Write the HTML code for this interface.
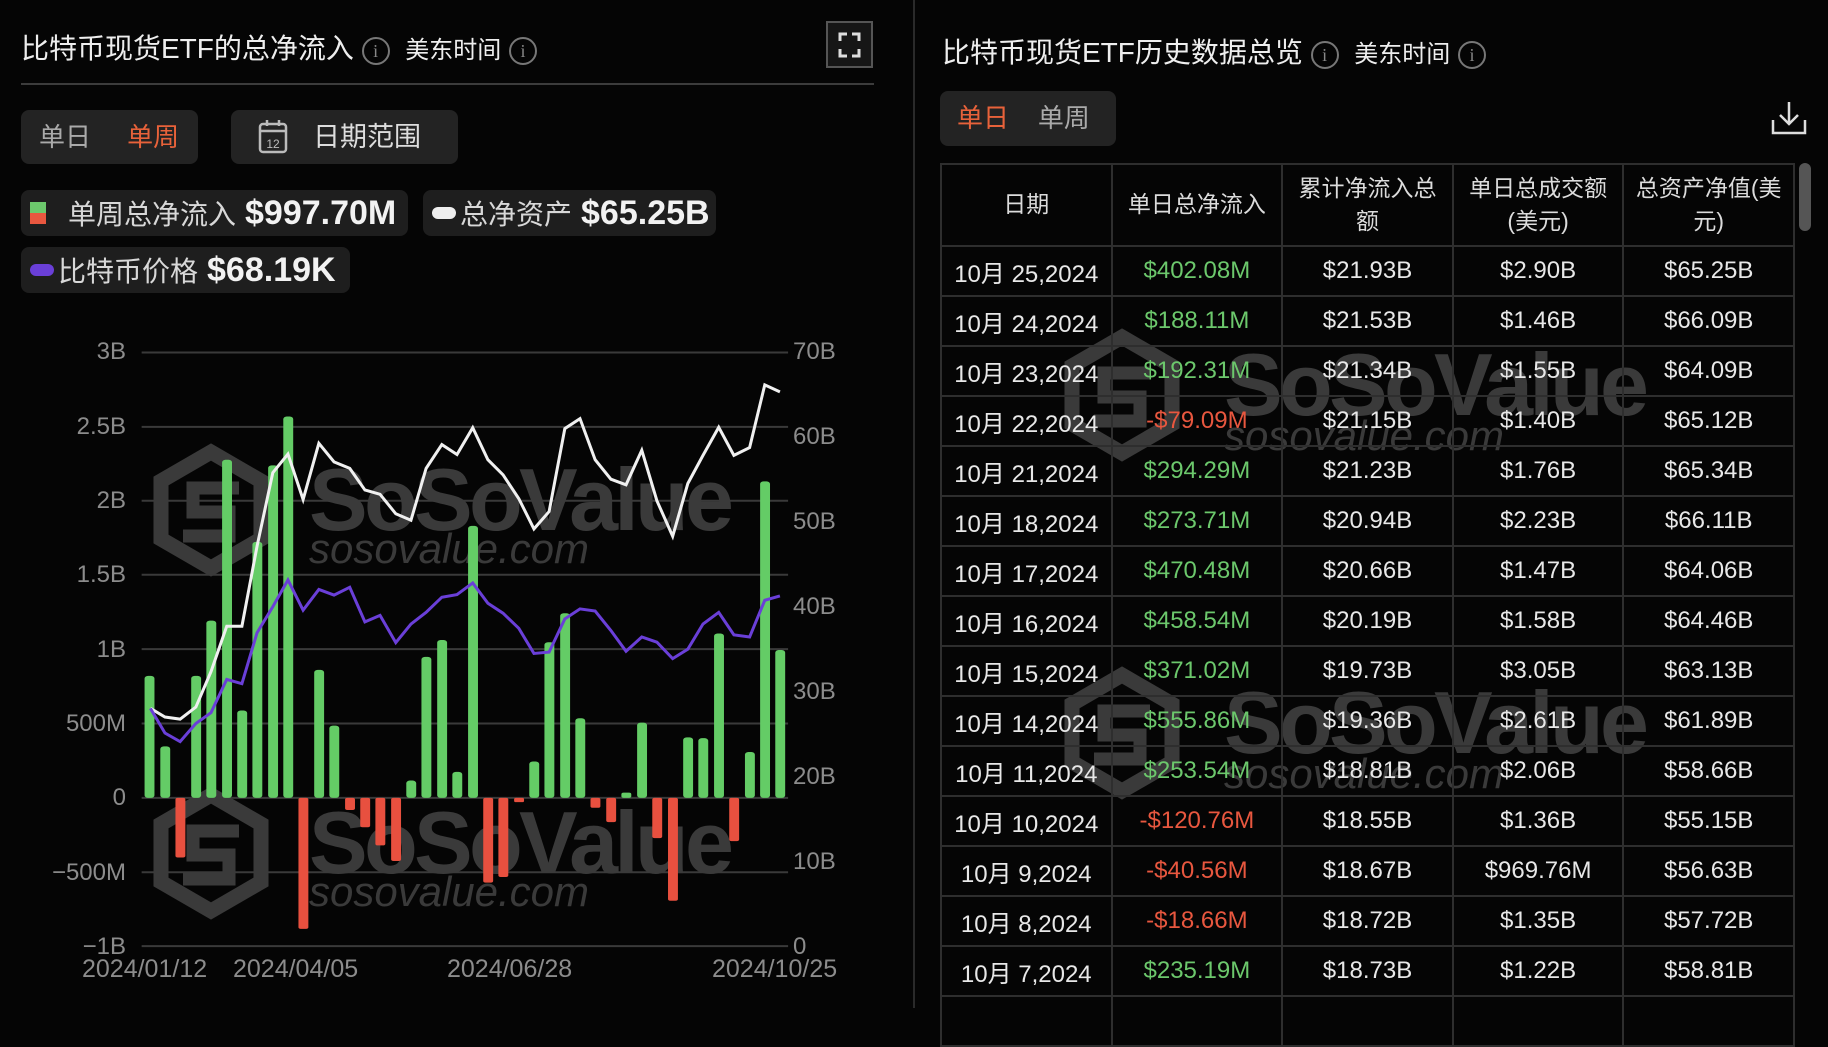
<!DOCTYPE html>
<html><head><meta charset="utf-8"><style>
*{margin:0;padding:0;box-sizing:border-box}
body{width:1828px;height:1008px;background:#050505;overflow:hidden;position:relative;font-family:"Liberation Sans","Noto Sans CJK SC",sans-serif;color:#e6e6e6}
.a{position:absolute;white-space:nowrap}
.info{display:inline-block;width:28px;height:28px;border:2px solid #777;border-radius:50%;color:#888;font-size:18px;text-align:center;line-height:24px;font-family:"Liberation Serif",serif;vertical-align:middle}
.chip{position:absolute;background:#1e1e1e;border-radius:8px;height:46px;display:flex;align-items:center;font-size:28px;color:#d8d8d8}
.chip b{color:#f2f2f2;font-size:34px;margin-left:9px}
.yl{position:absolute;font-size:24px;color:#8c8c8c;width:100px;text-align:right;left:26px}
.yr{position:absolute;font-size:24px;color:#8c8c8c;left:793px}
.dl{position:absolute;font-size:25px;color:#8c8c8c;top:955px}
table{position:absolute;left:940px;top:163px;border-collapse:collapse;font-size:24px;width:855px}
td{border:2px solid #2e2e2e;text-align:center;height:50px;color:#e8e8e8;width:171px}
tr:first-child td{height:82px;font-size:23px;line-height:1.45;color:#dcdcdc}
td.g{color:#6cc86c}td.r{color:#e8573f}
</style></head><body>
<div class="a" style="left:21px;top:27px;font-size:28px;color:#eee">比特币现货ETF的总净流入 <span class="info">i</span>&nbsp;&nbsp;<span style="font-size:24px">美东时间</span> <span class="info">i</span></div>
<div class="a" style="left:826px;top:21px;width:47px;height:47px;border:2px solid #555;background:#161616"></div>
<svg class="a" style="left:826px;top:21px" width="47" height="47"><path d="M14 20V13H21M26 13H33V20M33 28V35H26M21 35H14V28" stroke="#ddd" stroke-width="3" fill="none"/></svg>
<div class="a" style="left:21px;top:83px;width:853px;height:2px;background:#3c3c3c"></div>
<div class="a" style="left:21px;top:110px;width:177px;height:54px;background:#232323;border-radius:8px;font-size:26px;line-height:54px;padding-left:18px;color:#aaa">单日&nbsp;&nbsp;&nbsp;&nbsp;&nbsp;<span style="color:#e8623a">单周</span></div>
<div class="a" style="left:231px;top:110px;width:227px;height:54px;background:#232323;border-radius:8px;font-size:27px;line-height:54px;padding-left:82px;color:#ddd">日期范围</div>
<svg class="a" style="left:258px;top:118px" width="32" height="38"><rect x="2" y="6" width="26" height="28" rx="3" stroke="#bbb" stroke-width="2.5" fill="none"/><path d="M2 13H28M9 2V8M21 2V8" stroke="#bbb" stroke-width="2.5"/><text x="15" y="30" font-size="12" fill="#bbb" text-anchor="middle" font-family="Liberation Sans">12</text></svg>
<div class="chip" style="left:21px;top:190px;width:387px"><span style="display:inline-block;width:16px;height:22px;margin-left:9px;background:linear-gradient(#6cc86c 50%,#e8573f 50%);margin-right:22px"></span>单周总净流入<b>$997.70M</b></div>
<div class="chip" style="left:423px;top:190px;width:293px"><span style="display:inline-block;width:24px;height:12px;border-radius:6px;background:#eee;margin:0 4px 0 9px"></span>总净资产<b>$65.25B</b></div>
<div class="chip" style="left:21px;top:247px;width:329px"><span style="display:inline-block;width:24px;height:12px;border-radius:6px;background:#6a3fd8;margin:0 4px 0 9px"></span>比特币价格<b>$68.19K</b></div>
<svg class="a" style="left:0;top:0" width="1828" height="1008">
<defs><g id="hx"><path d="M0 -58L50 -29V29L0 58L-50 29V-29Z" stroke="#3a3a3a" stroke-width="15" fill="none"/><path d="M28 -22H-18V2H18V26H-28" stroke="#3a3a3a" stroke-width="13" fill="none"/></g></defs>
<g font-family="Liberation Sans" fill="#3a3a3a">
<use href="#hx" x="211" y="510"/><text x="309" y="530" font-size="88" font-weight="bold" textLength="425">SoSoValue</text><text x="309" y="563" font-size="42" font-style="italic" textLength="280">sosovalue.com</text>
<use href="#hx" x="211" y="853"/><text x="309" y="873" font-size="88" font-weight="bold" textLength="425">SoSoValue</text><text x="309" y="906" font-size="42" font-style="italic" textLength="280">sosovalue.com</text>
<use href="#hx" x="1122" y="395"/><text x="1224" y="415" font-size="88" font-weight="bold" textLength="425">SoSoValue</text><text x="1224" y="450" font-size="42" font-style="italic" textLength="280">sosovalue.com</text>
<use href="#hx" x="1122" y="733"/><text x="1224" y="753" font-size="88" font-weight="bold" textLength="425">SoSoValue</text><text x="1224" y="788" font-size="42" font-style="italic" textLength="280">sosovalue.com</text>
</g></svg>
<svg class="a" style="left:0;top:330px" width="914" height="678" viewBox="0 0 1568 1568" preserveAspectRatio="none">
<path vector-effect="non-scaling-stroke" stroke="#3a3a3a" stroke-width="2" d="M243 52H1352M243 224H1352M243 395H1352M243 566H1352M243 738H1352M243 910H1352M243 1082H1352M243 1254H1352M243 1425H1352"/>
<g fill="#64cc66">
<rect x="248" y="800" width="17" height="282" rx="6"/><rect x="275" y="963" width="17" height="119" rx="6"/><rect x="328" y="800" width="17" height="282" rx="6"/><rect x="354" y="672" width="17" height="410" rx="6"/><rect x="381" y="300" width="17" height="782" rx="6"/><rect x="407" y="880" width="17" height="202" rx="6"/><rect x="433" y="490" width="17" height="592" rx="6"/><rect x="460" y="313" width="17" height="769" rx="6"/><rect x="486" y="200" width="17" height="882" rx="6"/><rect x="539" y="786" width="17" height="296" rx="6"/><rect x="565" y="915" width="17" height="167" rx="6"/><rect x="697" y="1042" width="17" height="40" rx="6"/><rect x="723" y="756" width="17" height="326" rx="6"/><rect x="750" y="717" width="17" height="365" rx="6"/><rect x="776" y="1022" width="17" height="60" rx="6"/><rect x="803" y="453" width="17" height="629" rx="6"/><rect x="908" y="998" width="17" height="84" rx="6"/><rect x="934" y="722" width="17" height="360" rx="6"/><rect x="961" y="655" width="17" height="427" rx="6"/><rect x="987" y="898" width="17" height="184" rx="6"/><rect x="1066" y="1070" width="17" height="12" rx="4"/><rect x="1093" y="908" width="17" height="174" rx="6"/><rect x="1172" y="942" width="17" height="140" rx="6"/><rect x="1198" y="944" width="17" height="138" rx="6"/><rect x="1225" y="702" width="17" height="380" rx="6"/><rect x="1278" y="976" width="17" height="106" rx="6"/><rect x="1304" y="350" width="17" height="732" rx="6"/><rect x="1330" y="740" width="17" height="342" rx="6"/>
</g>
<g fill="#e8503f">
<rect x="301" y="1082" width="17" height="138" rx="4"/><rect x="512" y="1082" width="17" height="303" rx="4"/><rect x="592" y="1082" width="17" height="28" rx="4"/><rect x="618" y="1082" width="17" height="68" rx="4"/><rect x="644" y="1082" width="17" height="110" rx="4"/><rect x="671" y="1082" width="17" height="146" rx="4"/><rect x="829" y="1082" width="17" height="196" rx="4"/><rect x="855" y="1082" width="17" height="183" rx="4"/><rect x="882" y="1082" width="17" height="10" rx="3"/><rect x="1013" y="1082" width="17" height="23" rx="4"/><rect x="1040" y="1082" width="17" height="56" rx="4"/><rect x="1119" y="1082" width="17" height="93" rx="4"/><rect x="1146" y="1082" width="17" height="238" rx="4"/><rect x="1251" y="1082" width="17" height="100" rx="4"/>
</g>
<polyline vector-effect="non-scaling-stroke" fill="none" stroke="#f0f0f0" stroke-width="3" points="258,875 283,895 309,900 336,872 362,790 389,685 415,685 441,500 468,330 494,287 520,392 547,262 573,305 600,320 626,370 652,380 679,425 705,440 731,320 758,265 784,288 811,226 837,300 863,335 890,390 916,460 942,420 969,228 995,205 1021,300 1048,345 1074,358 1101,278 1127,395 1154,477 1180,355 1206,290 1233,225 1259,290 1286,272 1312,127 1338,143"/>
<polyline vector-effect="non-scaling-stroke" fill="none" stroke="#6a3fd8" stroke-width="3" points="258,875 283,932 309,952 336,910 362,885 389,808 415,818 441,700 468,640 494,578 520,648 547,600 573,613 600,595 626,675 652,660 679,723 705,680 731,653 758,618 784,612 811,585 837,632 863,655 890,690 916,748 942,745 969,668 995,645 1021,650 1048,695 1074,743 1101,710 1127,722 1154,760 1180,738 1206,680 1233,653 1259,705 1286,710 1312,625 1338,615"/>
</svg>
<div class="yl" style="top:338px">3B</div><div class="yl" style="top:413px">2.5B</div><div class="yl" style="top:487px">2B</div><div class="yl" style="top:561px">1.5B</div><div class="yl" style="top:636px">1B</div><div class="yl" style="top:710px">500M</div><div class="yl" style="top:784px">0</div><div class="yl" style="top:859px">−500M</div><div class="yl" style="top:933px">−1B</div>
<div class="yr" style="top:338px">70B</div><div class="yr" style="top:423px">60B</div><div class="yr" style="top:508px">50B</div><div class="yr" style="top:593px">40B</div><div class="yr" style="top:678px">30B</div><div class="yr" style="top:763px">20B</div><div class="yr" style="top:848px">10B</div><div class="yr" style="top:933px">0</div>
<div class="dl" style="left:82px">2024/01/12</div><div class="dl" style="left:233px">2024/04/05</div><div class="dl" style="left:447px">2024/06/28</div><div class="dl" style="left:712px">2024/10/25</div>
<div class="a" style="left:913px;top:0;width:2px;height:1008px;background:#2a2a2a"></div>
<div class="a" style="left:942px;top:31px;font-size:28px;color:#eee">比特币现货ETF历史数据总览 <span class="info">i</span>&nbsp;&nbsp;<span style="font-size:24px">美东时间</span> <span class="info">i</span></div>
<div class="a" style="left:940px;top:91px;width:176px;height:55px;background:#232323;border-radius:8px;font-size:26px;line-height:55px;padding-left:17px;color:#aaa"><span style="color:#e8623a">单日</span>&nbsp;&nbsp;&nbsp;&nbsp;单周</div>
<svg class="a" style="left:1770px;top:98px" width="38" height="38"><path d="M19 4V26M10 17L19 26L28 17M3 22V35H35V22" stroke="#ddd" stroke-width="2.5" fill="none"/></svg>
<div class="a" style="left:1799px;top:163px;width:12px;height:68px;border-radius:6px;background:#555"></div>
<table>
<tr><td>日期</td><td>单日总净流入</td><td>累计净流入总<br>额</td><td>单日总成交额<br>(美元)</td><td>总资产净值(美<br>元)</td></tr>
<tr><td>10月 25,2024</td><td class="g">$402.08M</td><td>$21.93B</td><td>$2.90B</td><td>$65.25B</td></tr>
<tr><td>10月 24,2024</td><td class="g">$188.11M</td><td>$21.53B</td><td>$1.46B</td><td>$66.09B</td></tr>
<tr><td>10月 23,2024</td><td class="g">$192.31M</td><td>$21.34B</td><td>$1.55B</td><td>$64.09B</td></tr>
<tr><td>10月 22,2024</td><td class="r">-$79.09M</td><td>$21.15B</td><td>$1.40B</td><td>$65.12B</td></tr>
<tr><td>10月 21,2024</td><td class="g">$294.29M</td><td>$21.23B</td><td>$1.76B</td><td>$65.34B</td></tr>
<tr><td>10月 18,2024</td><td class="g">$273.71M</td><td>$20.94B</td><td>$2.23B</td><td>$66.11B</td></tr>
<tr><td>10月 17,2024</td><td class="g">$470.48M</td><td>$20.66B</td><td>$1.47B</td><td>$64.06B</td></tr>
<tr><td>10月 16,2024</td><td class="g">$458.54M</td><td>$20.19B</td><td>$1.58B</td><td>$64.46B</td></tr>
<tr><td>10月 15,2024</td><td class="g">$371.02M</td><td>$19.73B</td><td>$3.05B</td><td>$63.13B</td></tr>
<tr><td>10月 14,2024</td><td class="g">$555.86M</td><td>$19.36B</td><td>$2.61B</td><td>$61.89B</td></tr>
<tr><td>10月 11,2024</td><td class="g">$253.54M</td><td>$18.81B</td><td>$2.06B</td><td>$58.66B</td></tr>
<tr><td>10月 10,2024</td><td class="r">-$120.76M</td><td>$18.55B</td><td>$1.36B</td><td>$55.15B</td></tr>
<tr><td>10月 9,2024</td><td class="r">-$40.56M</td><td>$18.67B</td><td>$969.76M</td><td>$56.63B</td></tr>
<tr><td>10月 8,2024</td><td class="r">-$18.66M</td><td>$18.72B</td><td>$1.35B</td><td>$57.72B</td></tr>
<tr><td>10月 7,2024</td><td class="g">$235.19M</td><td>$18.73B</td><td>$1.22B</td><td>$58.81B</td></tr>
<tr><td>&nbsp;</td><td></td><td></td><td></td><td></td></tr>
</table>
</body></html>
